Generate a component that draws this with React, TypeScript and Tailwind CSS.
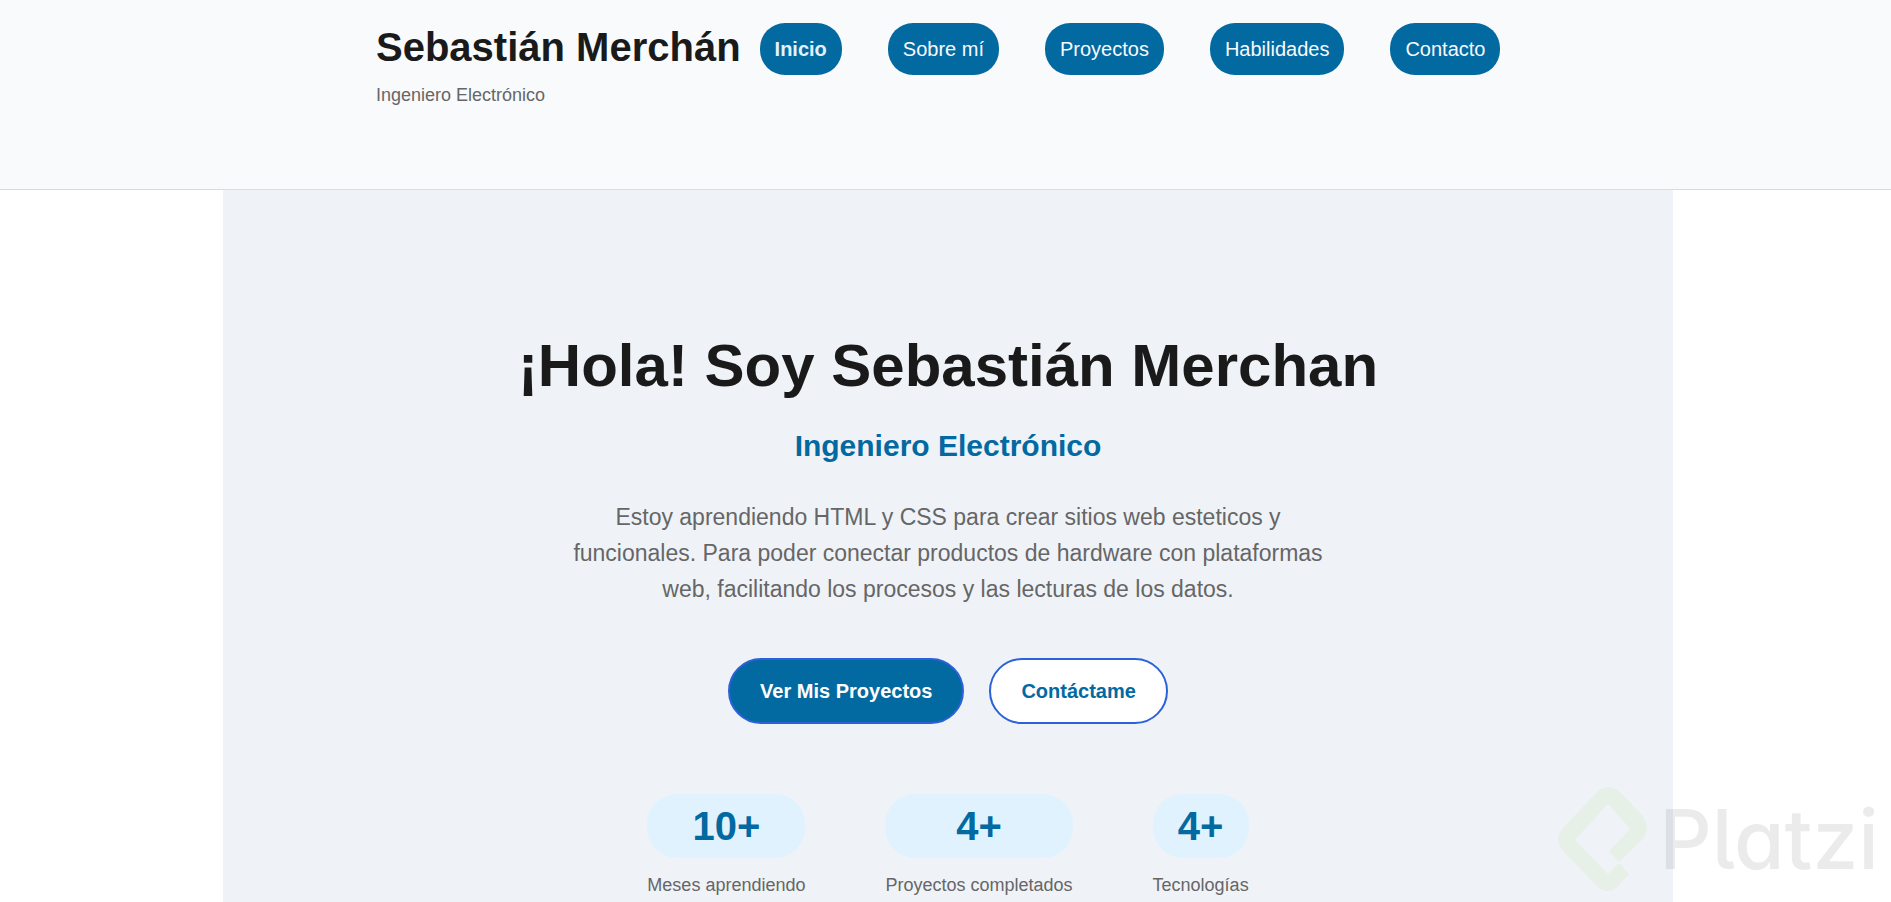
const navLinks = [
  { label: "Inicio", href: "#inicio", active: true },
  { label: "Sobre mí", href: "#sobre-mi", active: false },
  { label: "Proyectos", href: "#proyectos", active: false },
  { label: "Habilidades", href: "#habilidades", active: false },
  { label: "Contacto", href: "#contacto", active: false },
];

const stats = [
  { value: "10+", label: "Meses aprendiendo" },
  { value: "4+", label: "Proyectos completados" },
  { value: "4+", label: "Tecnologías" },
];

const Header = () => (
  <header className="border-b border-[#d9dcdf] bg-[#f8fafc] pl-[5px]">
    <div className="mx-auto flex max-w-[1144px] items-start gap-[19px] pt-[15px] pb-20">
      <div className="shrink-0">
        <h1 className="text-[40px] leading-16 font-bold">Sebastián Merchán</h1>
        <p className="pt-0.5 text-lg leading-7 text-[#666666]">Ingeniero Electrónico</p>
      </div>
      <nav className="pt-2" aria-label="Principal">
        <ul className="flex gap-[46px]">
          {navLinks.map((link) => (
            <li key={link.href}>
              <a
                href={link.href}
                className={`block rounded-[25px] bg-[#0369a1] px-[15px] py-2.5 text-xl leading-8 whitespace-nowrap ${
                  link.active ? "font-bold text-[#e0f2fe]" : "text-[#f8fafc]"
                }`}
              >
                {link.label}
              </a>
            </li>
          ))}
        </ul>
      </nav>
    </div>
  </header>
);

const Hero = () => (
  <section id="inicio" className="mx-auto w-full max-w-[1450px] flex-1 bg-[#eff3f8] pt-[140px] text-center">
    <h2 className="text-6xl leading-[72px] font-bold">¡Hola! Soy Sebastián Merchan</h2>
    <p className="mt-5 text-3xl leading-12 font-bold text-[#0369a1]">Ingeniero Electrónico</p>
    <p className="mx-auto mt-[29px] max-w-[760px] text-[23px] leading-9 text-[#666666]">
      Estoy aprendiendo HTML y CSS para crear sitios web esteticos y funcionales. Para poder conectar
      productos de hardware con plataformas web, facilitando los procesos y las lecturas de los datos.
    </p>

    {/* Acciones */}
    <div className="mt-[51px] flex justify-center gap-[25px]">
      <a
        href="#proyectos"
        className="rounded-[33px] border-2 border-[#2b62d9] bg-[#0369a1] px-[30px] py-[15px] text-xl leading-8 font-bold text-white"
      >
        Ver Mis Proyectos
      </a>
      <a
        href="#contacto"
        className="rounded-[33px] border-2 border-[#2b62d9] bg-white px-[30px] py-[15px] text-xl leading-8 font-bold text-[#0369a1]"
      >
        Contáctame
      </a>
    </div>

    {/* Estadísticas */}
    <div className="mt-[70px] flex justify-center gap-20">
      {stats.map((stat) => (
        <div key={stat.label}>
          <div className="rounded-[30px] bg-[#e0f2fe] text-[40px] leading-16 font-bold text-[#0369a1]">
            {stat.value}
          </div>
          <div className="mt-[13px] text-lg leading-7 text-[#666666]">{stat.label}</div>
        </div>
      ))}
    </div>
  </section>
);

const Watermark = () => (
  <div className="pointer-events-none fixed right-3 bottom-1.5 flex items-center gap-2">
    <svg viewBox="14 14 96 112" className="h-28 w-24" aria-hidden="true">
      <path
        fill="#e6f0e6"
        d="M57 21Q67 13 78 21L101 45Q110 57 102 69L78 92L68 81L89 59L67 34L34 70L67 104L78 93L88 104L76 117Q67 125 57 117L21 80Q13 70 21 59Z"
      />
    </svg>
    <span className="font-['Inter',sans-serif] text-[82px] leading-[100px] font-medium text-black/8 [font-feature-settings:'cv05','cv11']">
      Platzi
    </span>
  </div>
);

const App = () => {
  return (
    <div className="flex min-h-screen flex-col bg-white font-['Liberation_Sans',Arial,sans-serif] text-[#1a1a1a]">
      <Header />
      <main className="flex flex-1 flex-col pl-[5px]">
        <Hero />
      </main>
      <Watermark />
    </div>
  );
};

export default App;
